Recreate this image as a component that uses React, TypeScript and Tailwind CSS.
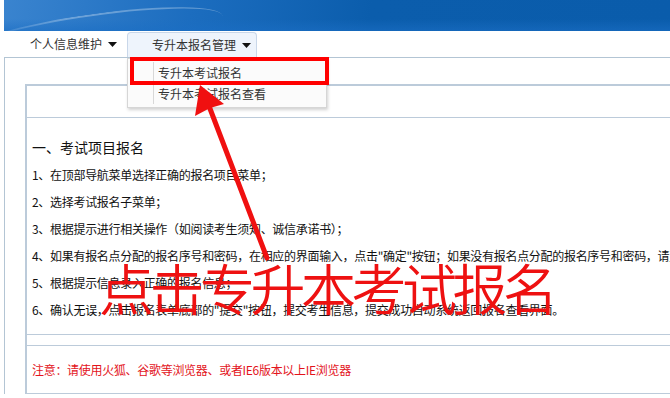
import React from 'react';

const STEPS = [
  '1、在顶部导航菜单选择正确的报名项目菜单；',
  '2、选择考试报名子菜单；',
  '3、根据提示进行相关操作（如阅读考生须知、诚信承诺书）；',
  '4、如果有报名点分配的报名序号和密码，在相应的界面输入，点击"确定"按钮；如果没有报名点分配的报名序号和密码，请直接点击"下一步"按钮；',
  '5、根据提示信息录入正确的报名信息；',
  '6、确认无误，点击报名表单底部的"提交"按钮，提交考生信息，提交成功自动系统返回报名查看界面。',
];

const Caret = () => (
  <svg width="9" height="5" viewBox="0 0 9 5" className="ml-[6px]">
    <path d="M0 0h9L4.5 5z" fill="#111" />
  </svg>
);

export default function App() {
  return (
    <div className="relative w-[670px] h-[398px] overflow-hidden bg-white font-['Noto_Sans_CJK_SC',sans-serif] text-[12px] text-[#111]">
      {/* header band */}
      <div className="relative ml-1 h-[31px] overflow-hidden bg-[linear-gradient(100deg,#3a84cf_0%,#1c6dbf_28%,#0b5dac_55%,#0a5cab_100%)]">
        <div className="absolute -left-10 top-[14px] h-[40px] w-[260px] rounded-[50%] border-t-2 border-white/30 rotate-[-8deg]" />
        <div className="absolute inset-x-0 bottom-0 h-[12px] bg-gradient-to-b from-transparent to-[#1b6ec4]/60" />
      </div>

      {/* nav */}
      <div className="flex h-[26px] items-stretch pl-[30px] text-[#333]">
        <div className="flex items-center">
          个人信息维护
          <Caret />
        </div>
        <div className="relative ml-[10px] mt-px flex w-[130px] items-center rounded-t-[4px] border border-b-0 border-[#c9d7e9] bg-[#eef4fc] pl-[24px]">
          专升本报名管理
          <Caret />
          {/* dropdown */}
          <div className="absolute left-[-1px] top-[25px] z-10 w-[200px] border border-[#d6d6d6] bg-[#fbfbfb] py-[3px] shadow-[1px_2px_3px_rgba(0,0,0,0.18)]">
            <div className="flex h-[21px] items-center">
              <div className="h-full w-[26px] border-r border-[#d8d8d8]" />
              <span className="pl-[4px]">专升本考试报名</span>
            </div>
            <div className="flex h-[21px] items-center">
              <div className="h-full w-[26px] border-r border-[#d8d8d8]" />
              <span className="pl-[4px]">专升本考试报名查看</span>
            </div>
          </div>
        </div>
      </div>

      {/* outer frame */}
      <div className="ml-1 border-l border-t border-[#b3c5d4] pl-[20px] pt-[26px]">
        <div className="w-[1000px] border-l-2 border-t-2 border-[#bccbda]">
          <div className="h-[32px] border-b border-[#bccbda]" />
          <div className="border-b border-[#bccbda] pl-[5px] pt-[16px] pb-[11px]">
            <div className="text-[14px] leading-[27px]">一、考试项目报名</div>
            {STEPS.map((s) => (
              <div key={s} className="whitespace-nowrap leading-[27px] tracking-[-0.3px]">
                {s}
              </div>
            ))}
          </div>
          <div className="h-[11px] border-b border-[#bccbda]" />
          <div className="flex h-[48px] items-center border-b border-[#bccbda] pl-[5px] tracking-[-0.3px] text-[#e3141c]">
            注意：请使用火狐、谷歌等浏览器、或者IE6版本以上IE浏览器
          </div>
        </div>
      </div>

      {/* annotation: red box */}
      <div className="absolute left-[130px] top-[57px] z-20 h-[28px] w-[199px] border-4 border-[#ff0000]" />

      {/* annotation: arrow */}
      <svg className="absolute left-0 top-0 z-20" width="670" height="398" viewBox="0 0 670 398">
        <line x1="209" y1="106" x2="267" y2="258" stroke="#f01010" strokeWidth="5" strokeLinecap="round" />
        <polygon points="200,85 224,104 210,108 195,116" fill="#f01010" />
      </svg>

      {/* annotation: big text */}
      <div className="absolute left-[99px] top-[259px] z-20 whitespace-nowrap text-[55px] font-[350] leading-none tracking-[-4.5px] text-[#ee1111]">
        点击专升本考试报名
      </div>
    </div>
  );
}
